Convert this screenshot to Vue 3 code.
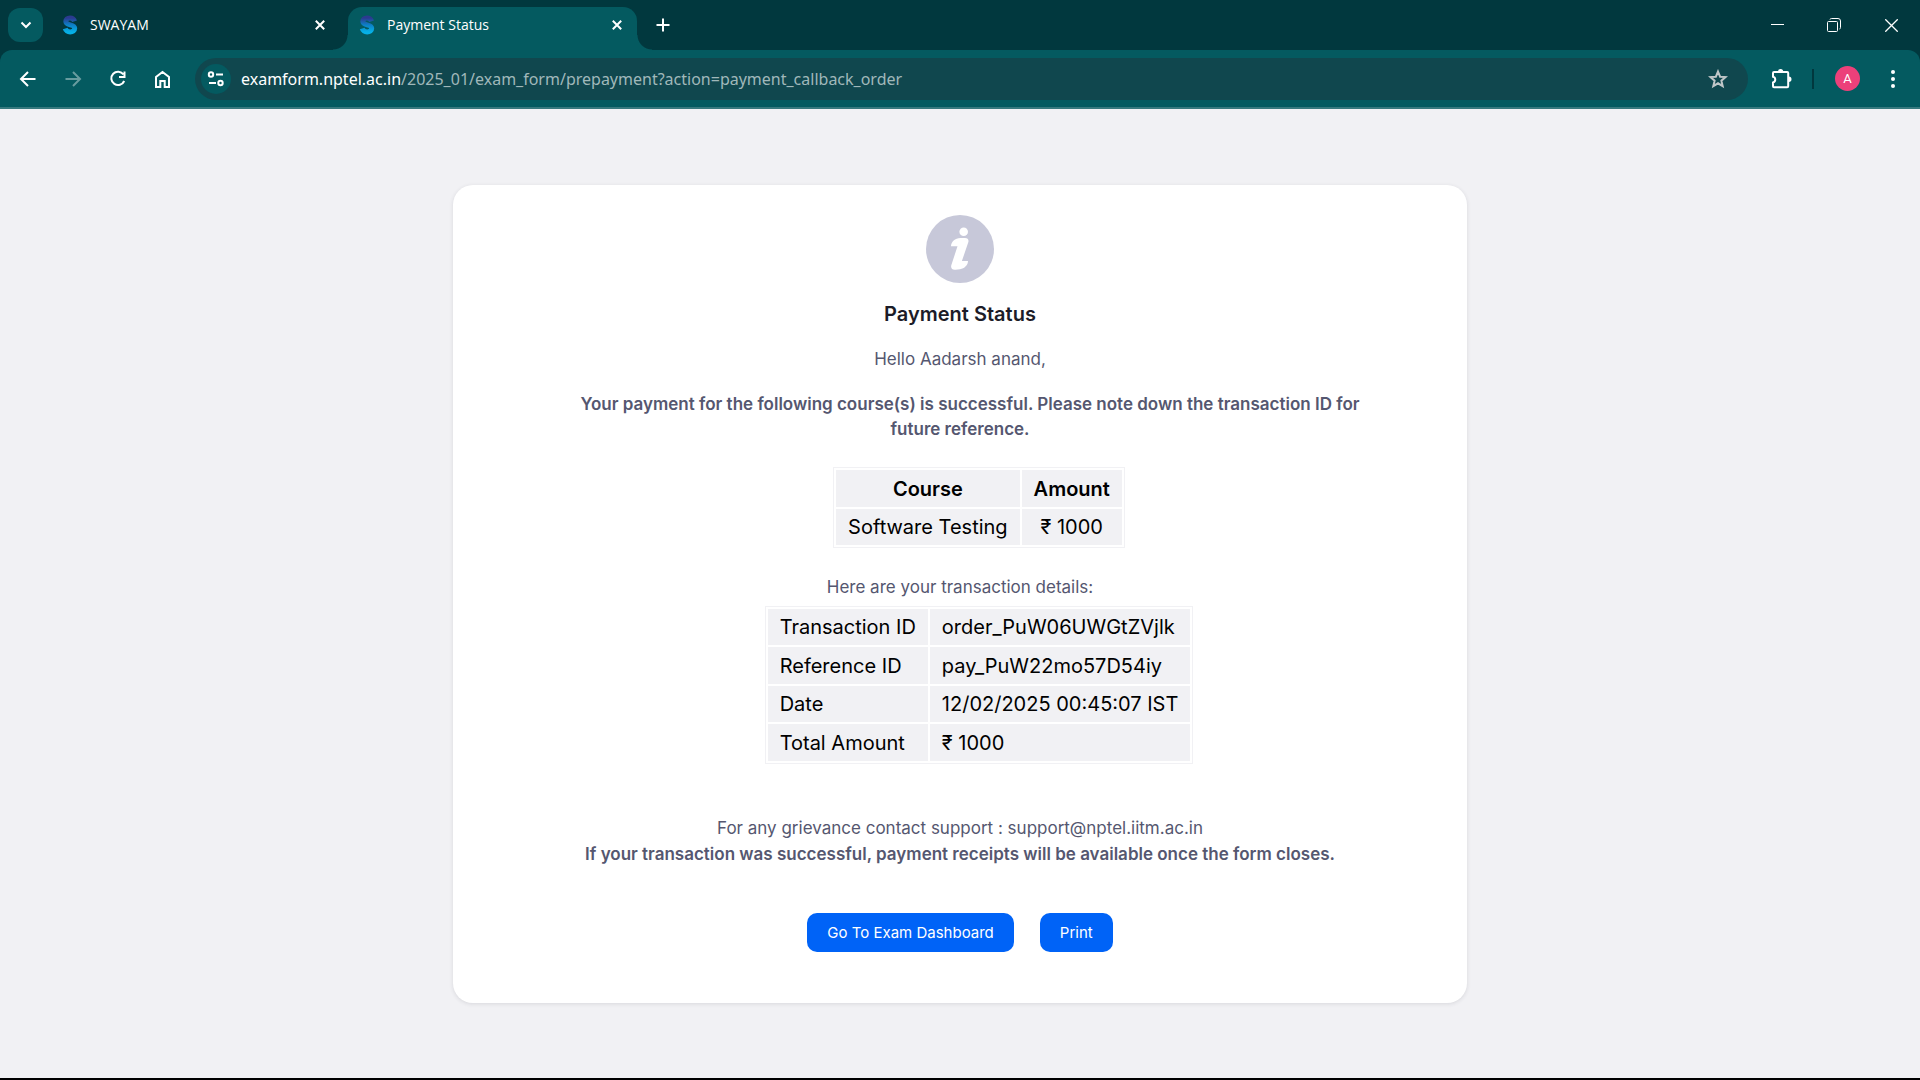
<script setup>
const tabs = [
  { title: 'SWAYAM', active: false },
  { title: 'Payment Status', active: true },
]

const courses = [{ name: 'Software Testing', amount: '₹ 1000' }]

const details = [
  { label: 'Transaction ID', value: 'order_PuW06UWGtZVjlk' },
  { label: 'Reference ID', value: 'pay_PuW22mo57D54iy' },
  { label: 'Date', value: '12/02/2025 00:45:07 IST' },
  { label: 'Total Amount', value: '₹ 1000' },
]
</script>

<template>
  <div class="window">
    <header class="chrome">
      <div class="strip">
        <button class="tab-search" aria-label="Search tabs">
          <svg width="12" height="8" viewBox="0 0 12 8"><path d="M1.500 1.500 6 6l4.500-4.500" /></svg>
        </button>
        <div class="tabs">
          <div v-for="tab in tabs" :key="tab.title" class="tab" :class="{ active: tab.active }">
            <svg class="favicon" width="18" height="22" viewBox="0 0 18 22" aria-hidden="true">
              <defs>
                <linearGradient :id="'s-' + tab.active" x1="0" y1="0" x2="0" y2="1">
                  <stop offset="0" stop-color="#2b3a8f" />
                  <stop offset="0.5" stop-color="#0d7fc6" />
                  <stop offset="1" stop-color="#06b0e6" />
                </linearGradient>
              </defs>
              <path
                :stroke="'url(#s-' + tab.active + ')'"
                d="M13.600 7.300C12.800 5 11.200 4 9 4 6.300 4 4.800 5.400 4.800 7.300c0 4.700 8.900 2.300 8.900 7 0 2.300-2 3.600-4.500 3.600-2.500 0-4.200-1-5-3.400"
              />
            </svg>
            <span class="tab-title">{{ tab.title }}</span>
            <button class="tab-close" :aria-label="'Close ' + tab.title">
              <svg width="10" height="10" viewBox="0 0 10 10"><path d="m.8.8 8.400 8.400M9.200.8.8 9.200" /></svg>
            </button>
          </div>
        </div>
        <button class="new-tab" aria-label="New tab">
          <svg width="14" height="14" viewBox="0 0 14 14"><path d="M7 .5v13M.5 7h13" /></svg>
        </button>
        <div class="window-controls">
          <button aria-label="Minimize">
            <svg width="13" height="13" viewBox="0 0 13 13"><path d="M0 5.500h13" /></svg>
          </button>
          <button aria-label="Restore">
            <svg width="15" height="14" viewBox="0 0 15 14">
              <rect x=".5" y="3.500" width="10" height="10" rx="1" />
              <path d="M3 1.500Q3.200.5 4.500.5h6.500a2.500 2.500 0 0 1 2.500 2.500v6.500q0 1.300-1 1.500" />
            </svg>
          </button>
          <button aria-label="Close">
            <svg class="cross" width="13" height="13" viewBox="0 0 13 13"><path d="m.3.3 12.400 12.400M12.700.3.300 12.700" /></svg>
          </button>
        </div>
      </div>

      <div class="toolbar">
        <nav class="nav" aria-label="Browser">
          <button aria-label="Back">
            <svg width="20" height="20" viewBox="0 0 20 20"><path d="M17.500 10H3.500M10 3l-7 7 7 7" /></svg>
          </button>
          <button class="dim" aria-label="Forward" disabled>
            <svg width="20" height="20" viewBox="0 0 20 20"><path d="M2.500 10h14M10 3l7 7-7 7" /></svg>
          </button>
          <button aria-label="Reload">
            <svg width="20" height="20" viewBox="0 0 20 20">
              <path d="M15.500 5.500A6.700 6.700 0 1 0 16.200 12M16.500 2.500v5.500H11" />
            </svg>
          </button>
          <button aria-label="Home">
            <svg width="20" height="20" viewBox="0 0 20 20">
              <path d="M3 18V8L9.500 3 16 8v10h-4.300v-6H7.300v6z" />
            </svg>
          </button>
        </nav>

        <div class="omnibox">
          <button class="site-info" aria-label="View site information">
            <svg width="18" height="16" viewBox="0 0 18 16">
              <circle cx="4" cy="3.500" r="2.200" />
              <path d="M9 3.500h7M2 12h7" />
              <circle cx="13.500" cy="12" r="2.200" />
            </svg>
          </button>
          <a class="url" href="#">examform.nptel.ac.in<span>/2025_01/exam_form/prepayment?action=payment_callback_order</span></a>
          <button class="star" aria-label="Bookmark this tab">
            <svg width="20" height="20" viewBox="0 0 20 20">
              <path d="m10 2.500 2.100 5.200 5.500.4-4.200 3.600 1.300 5.500L10 14.300l-4.700 2.900 1.300-5.500-4.200-3.600 5.500-.4z" />
            </svg>
          </button>
        </div>

        <div class="actions">
          <button aria-label="Extensions">
            <svg width="22" height="22" viewBox="0 0 22 22">
              <path class="piece" d="M3 4h13.200a1 1 0 0 1 1 1v13.200a1 1 0 0 1-1 1H3a1 1 0 0 1-1-1v-3.700c3-.6 3-5.200 0-5.800V5a1 1 0 0 1 1-1z" />
              <path class="knob" d="M7 3.500a2.600 2.600 0 0 1 5.200 0zM17.800 8.500a2.600 2.600 0 0 1 0 5.400z" />
            </svg>
          </button>
          <span class="divider"></span>
          <button class="avatar" aria-label="Profile">A</button>
          <button aria-label="Menu">
            <svg class="dots" width="4" height="18" viewBox="0 0 4 18">
              <circle cx="2" cy="2" r="2" /><circle cx="2" cy="9" r="2" /><circle cx="2" cy="16" r="2" />
            </svg>
          </button>
        </div>
      </div>
    </header>

    <main class="page">
      <section class="card">
        <svg class="info" width="68" height="68" viewBox="0 0 68 68" aria-hidden="true">
          <circle cx="34" cy="34" r="34" fill="#c7c8d9" />
          <circle cx="37.700" cy="16.800" r="4.300" fill="#fff" />
          <path
            fill="#fff"
            d="M25 31.300C25 27 29 23 34.500 23H39c3 0 4.100 2 3.200 4.600L35.900 46H42c0 4-3.500 7.600-8 8.200l-4.500.6c-3.300.4-5-1.800-4.200-4.600l6.200-18.900z"
          />
        </svg>
        <h1>Payment Status</h1>
        <p class="hello">Hello Aadarsh anand,</p>
        <p class="notice">
          Your payment for the following course(s) is successful. Please note down the transaction ID for future reference.
        </p>

        <table class="courses">
          <thead>
            <tr><th scope="col">Course</th><th scope="col">Amount</th></tr>
          </thead>
          <tbody>
            <tr v-for="course in courses" :key="course.name">
              <td>{{ course.name }}</td>
              <td>{{ course.amount }}</td>
            </tr>
          </tbody>
        </table>

        <p class="intro">Here are your transaction details:</p>
        <table class="details">
          <tbody>
            <tr v-for="row in details" :key="row.label">
              <td>{{ row.label }}</td>
              <td>{{ row.value }}</td>
            </tr>
          </tbody>
        </table>

        <p class="support">
          For any grievance contact support : support@nptel.iitm.ac.in<br />
          <strong>If your transaction was successful, payment receipts will be available once the form closes.</strong>
        </p>

        <div class="buttons">
          <button>Go To Exam Dashboard</button>
          <button>Print</button>
        </div>
      </section>
    </main>
  </div>
</template>

<style>
body {
  background: #f1f1f4;
}
</style>

<style scoped>
* {
  box-sizing: border-box;
}

.window {
  display: flex;
  flex-direction: column;
  min-height: 100vh;
  border-bottom: 2px solid #000;
  background: #f1f1f4;
  font-family: Inter, "Liberation Sans", sans-serif;
}

button {
  display: flex;
  align-items: center;
  justify-content: center;
  margin: 0;
  padding: 0;
  border: 0;
  background: none;
  color: inherit;
  font: inherit;
}

/* Browser frame */
.chrome {
  background: #01383e;
  color: #fff;
  font-family: "Open Sans", "Noto Sans", sans-serif;
}

.chrome svg {
  display: block;
  fill: none;
  stroke: #fff;
  stroke-width: 2;
}

.strip {
  display: flex;
  align-items: center;
  height: 50px;
  padding-left: 8px;
}

.tab-search {
  width: 35px;
  height: 34px;
  border-radius: 12px;
  background: #045a60;
}

.tabs {
  display: flex;
  align-self: flex-end;
  margin-left: 8px;
}

.tab {
  position: relative;
  display: flex;
  align-items: center;
  width: 289px;
  height: 43px;
  padding: 0 14px 8px 10px;
  border-radius: 14px 14px 0 0;
}

.tab + .tab {
  margin-left: 8px;
}

.tab.active {
  background: #045a60;
}

.tab.active::before,
.tab.active::after {
  content: "";
  position: absolute;
  bottom: 0;
  width: 15px;
  height: 15px;
}

.tab.active::before {
  right: 100%;
  background: radial-gradient(circle at 0 0, transparent 14px, #045a60 15px);
}

.tab.active::after {
  left: 100%;
  background: radial-gradient(circle at 100% 0, transparent 14px, #045a60 15px);
}

.tab .favicon {
  stroke-width: 5;
}

.tab-title {
  flex: 1;
  margin-left: 11px;
  font-size: 14px;
  line-height: 20px;
}

.tab-close {
  width: 12px;
  height: 20px;
}

.new-tab {
  width: 30px;
  height: 30px;
  margin-left: 11px;
}

.window-controls {
  display: flex;
  margin-left: auto;
}

.window-controls button {
  width: 57px;
  height: 50px;
}

.window-controls svg {
  stroke-width: 1;
}

.window-controls .cross {
  stroke-width: 1.3;
}

.toolbar {
  display: flex;
  align-items: center;
  height: 59px;
  border-bottom: 2px solid #37797e;
  border-radius: 12px 12px 0 0;
  background: #045a60;
}

.nav {
  display: flex;
  padding-left: 5px;
}

.nav button {
  width: 45px;
  height: 45px;
}

.nav .dim {
  opacity: 0.4;
}

.omnibox {
  display: flex;
  flex: 1;
  align-items: center;
  height: 42px;
  margin-left: 10px;
  padding: 0 20px 0 6px;
  border-radius: 21px;
  background: #10474e;
}

.site-info {
  width: 30px;
  height: 30px;
  border-radius: 50%;
  background: #045a60;
}

.url {
  flex: 1;
  margin-left: 10px;
  color: #fff;
  font-family: "Noto Sans", "Open Sans", sans-serif;
  font-size: 16px;
  line-height: 24px;
  text-decoration: none;
  white-space: nowrap;
}

.url span {
  color: #a0b8ba;
}

.chrome .star svg {
  stroke: #c0c6c8;
}

.actions {
  display: flex;
  align-items: center;
}

.actions button {
  width: 44px;
  height: 44px;
  margin-left: 12px;
}

.actions .piece {
  stroke-width: 2;
}

.actions .knob {
  fill: #fff;
  stroke: none;
}

.divider {
  width: 2px;
  height: 20px;
  margin-left: 8px;
  background: #01383e;
}

.actions .avatar {
  width: 25px;
  height: 25px;
  margin-left: 21px;
  border-radius: 50%;
  background: #ec407a;
  font-family: Roboto, sans-serif;
  font-size: 13px;
}

.actions .avatar + button {
  width: 55px;
  margin-left: 5px;
}

.chrome .dots {
  fill: #fff;
  stroke: none;
}

/* Page */
.page {
  display: flex;
  justify-content: center;
  padding: 76px 24px 72px;
}

.card {
  display: flex;
  flex-direction: column;
  align-items: center;
  width: 100%;
  max-width: 1014px;
  padding: 30px 100px 51px;
  border-radius: 20px;
  background: #fff;
  box-shadow: 0 1px 4px rgba(40, 41, 61, 0.12);
  color: #555770;
  font-size: 17px;
  line-height: 25px;
  text-align: center;
}

h1 {
  margin: 19px 0 0;
  color: #1c1c28;
  font-size: 20px;
  font-weight: 600;
  line-height: 25px;
}

p {
  margin: 0;
}

.hello {
  margin-top: 20px;
}

.notice {
  margin-top: 20px;
  font-weight: 600;
  text-indent: 20px;
}

table {
  margin-left: 38px;
  border: 1px solid #f1f1f4;
  border-spacing: 2px;
  color: #000;
  font-size: 20px;
  line-height: 24px;
}

th,
td {
  padding: 6px 12px;
  background: #f1f1f4;
}

th {
  height: 37px;
  font-weight: 600;
}

.courses {
  margin-top: 25px;
}

.intro {
  margin-top: 27px;
}

.details {
  margin-top: 6px;
  text-align: left;
}

.details tr:nth-child(even) td {
  height: 37px;
}

.support {
  margin-top: 51px;
  line-height: 26px;
}

.support strong {
  font-weight: 600;
}

.buttons {
  display: flex;
  gap: 26px;
  margin-top: 46px;
}

.buttons button {
  height: 39px;
  padding: 0 20px;
  border-radius: 10px;
  background: #0063f7;
  color: #fff;
  font-size: 15px;
}
</style>
